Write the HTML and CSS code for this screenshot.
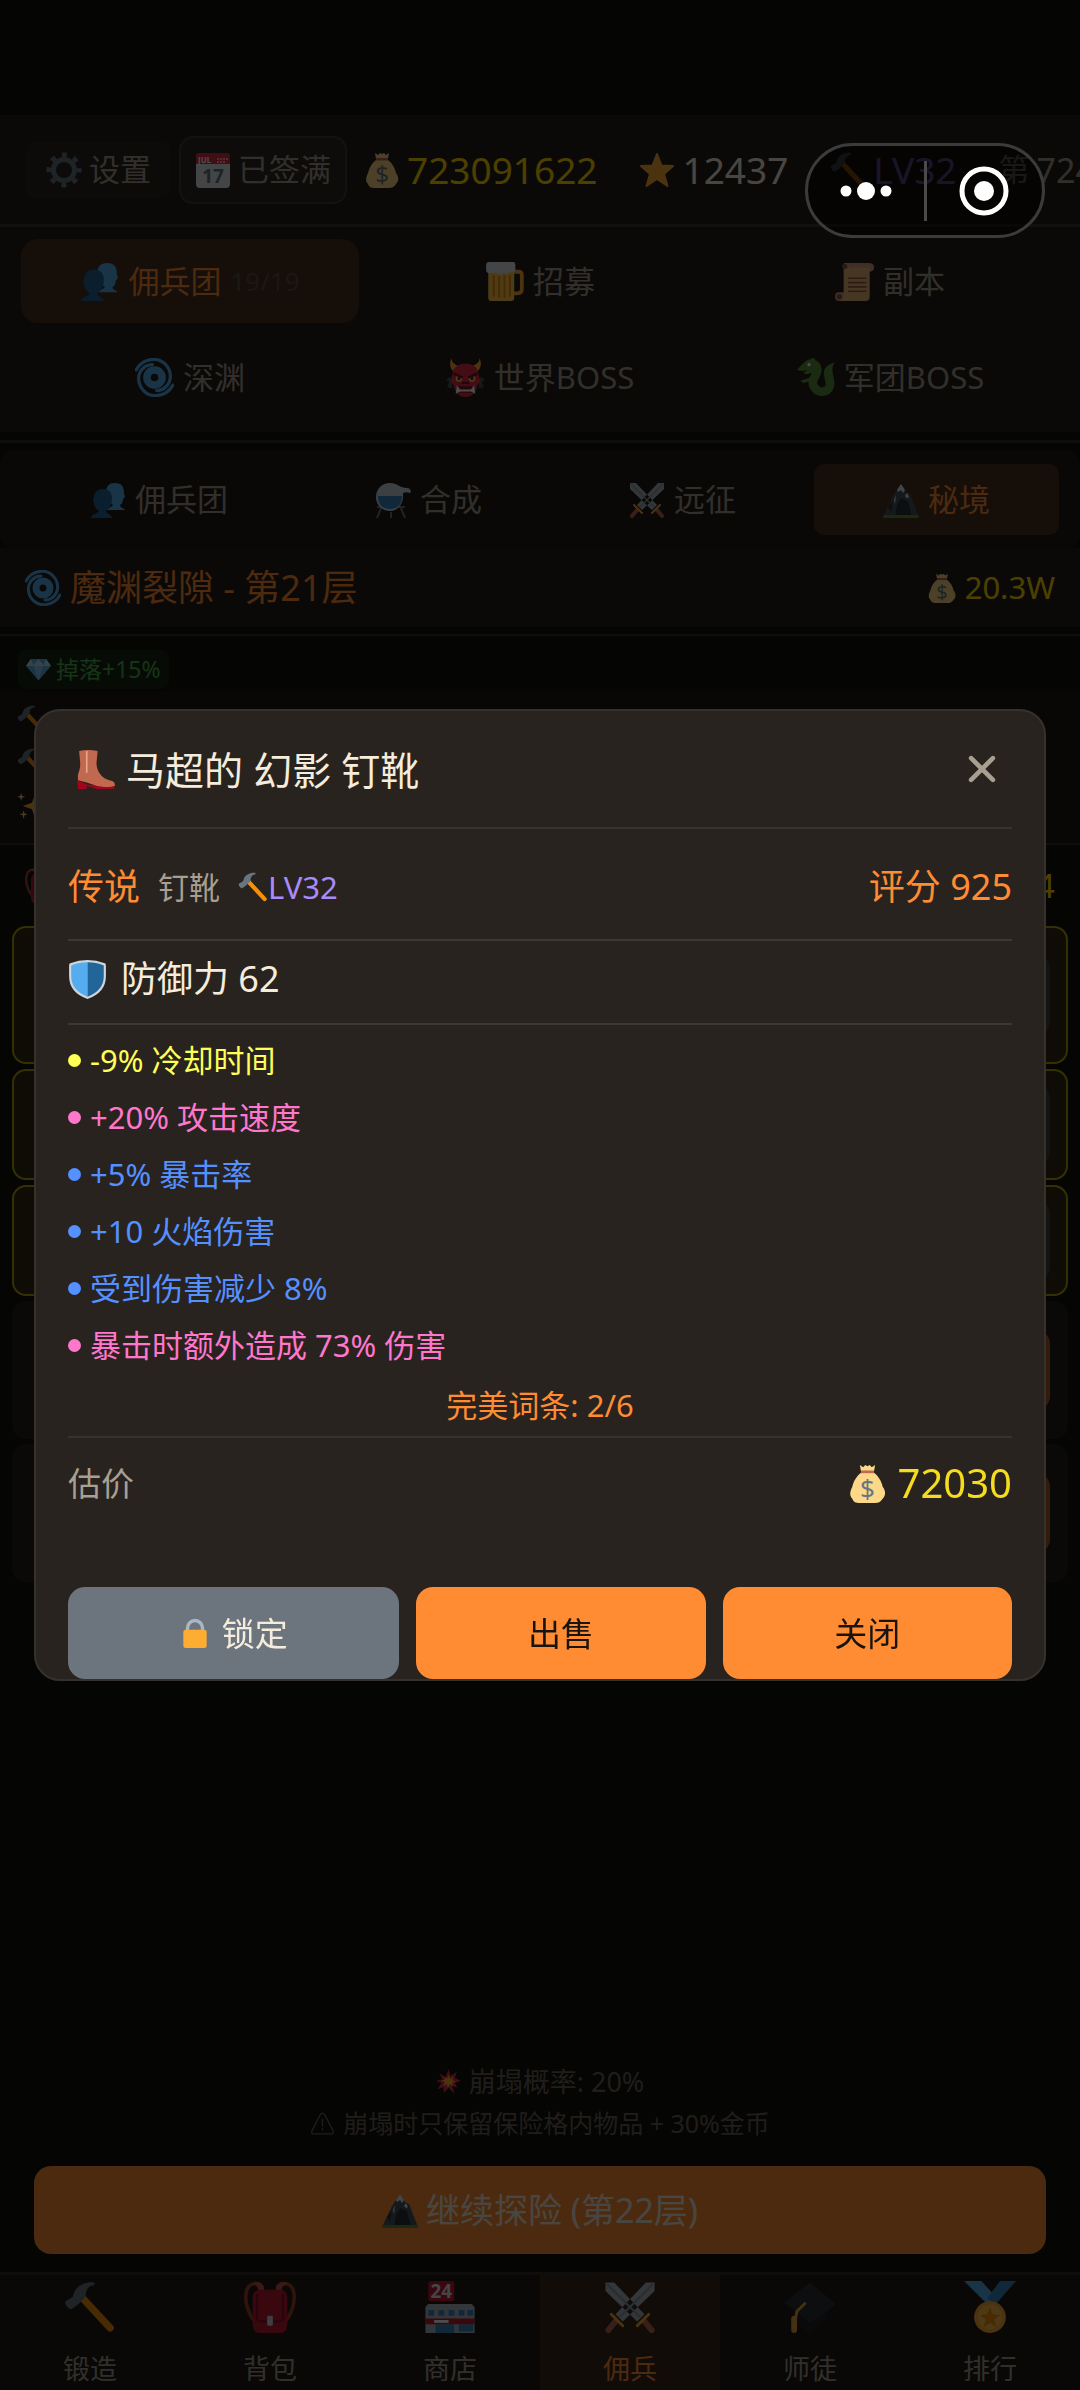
FILE: index.html
```
<!DOCTYPE html>
<html lang="zh-CN">
<head>
    <meta charset="UTF-8">
    <meta name="viewport" content="width=device-width, initial-scale=1.0">
    <title>佣兵团</title>
    <link rel="stylesheet" href="styles.css">
</head>
<body>
    <svg class="sprite" aria-hidden="true">
        <symbol id="gear" viewBox="0 0 36 36">
            <circle cx="18" cy="18" r="15" fill="none" stroke="#66757f" stroke-width="5" stroke-dasharray="5 6.78" stroke-dashoffset="2.5"/>
            <circle cx="18" cy="18" r="10.500" fill="none" stroke="#66757f" stroke-width="5"/>
        </symbol>
        <symbol id="calendar" viewBox="0 0 36 36">
            <path fill="#e1e8ed" d="M1 10h34v22a4 4 0 0 1-4 4H5a4 4 0 0 1-4-4z"/>
            <path fill="#dd2e44" d="M1 12V4a3 3 0 0 1 3-3h28a3 3 0 0 1 3 3v8z"/>
            <path fill="#f4abba" d="M22 6h2v2h-2zm3 0h2v2h-2zm3 0h2v2h-2zm3 0h2v2h-2zm-9 3h2v2h-2zm3 0h2v2h-2zm3 0h2v2h-2z"/>
            <text x="3" y="11" font-size="8" font-weight="700" fill="#fff">JUL</text>
            <text x="18" y="31" font-size="19" font-weight="700" text-anchor="middle" fill="#66757f">17</text>
        </symbol>
        <symbol id="money" viewBox="0 0 36 36">
            <path fill="#fdd888" d="M11 1l3 2 2-2 2 1 2-1 2 2 3-2-1 6H12zM12 8h12c4 3 7 8 8 13 3 4 3 8 0 11-2 3-4 4-7 4H11c-4 0-6-1-7-4-3-3-2-7 0-11 1-5 4-10 8-13z"/>
            <path fill="#bf6952" d="M12 6h12v2.500H12z"/>
            <text x="18" y="31" font-size="24" text-anchor="middle" fill="#67757f">$</text>
        </symbol>
        <symbol id="star" viewBox="0 0 36 36">
            <path fill="#ffac33" stroke="#ffac33" stroke-width="2" stroke-linejoin="round" d="M18 2l4.500 11.500L34 14l-9 8 3.500 12L18 27 7.500 34 11 22l-9-8 11.500-.5z"/>
        </symbol>
        <symbol id="hammer" viewBox="0 0 36 36">
            <path stroke="#f4900c" stroke-width="5" stroke-linecap="round" d="M13 12l19 20.500"/>
            <path fill="#66757f" d="M21 1C15 0 9 3 7 8l-1 3-5 3c-1 2 3 7 5 5l4-3 5-5c0-5 2-8 6-8z"/>
        </symbol>
        <symbol id="people" viewBox="0 0 36 36">
            <path fill="#55acee" d="M17 28c0-2 5-3 6-5-4-3-7-6-7-12 0-7 3-10 9-10 7 0 9 4 9 10l1 4-2 2c0 3-1 5-3 6 0 3 4 3 5 5z"/>
            <path fill="#226699" d="M1 36c0-4 7-4 8-7-3-2-5-4-5-8l-1-4 1-2c0-5 4-8 9-8 6 0 9 4 9 9 0 6-2 10-6 13 0 3 6 3 6 7z"/>
        </symbol>
        <symbol id="beer" viewBox="0 0 36 36">
            <path fill="none" stroke="#ffac33" stroke-width="3.500" d="M26 9h5q3 0 3 3v13q0 4-4 4h-5"/>
            <path fill="#ffcc4d" d="M3 7h24v26q0 3-3 3H6q-3 0-3-3z"/>
            <path stroke="#f4900c" stroke-width="2" d="M8 12v20M13 13v20M18 12v21M23 12v20"/>
            <path fill="#e1e8ed" d="M1 3q0-3 3-3h22q2 0 2 3v5q-2 3-5 1-3 3-6 1-3 3-6 0H5Q1 11 1 7z"/>
        </symbol>
        <symbol id="scroll" viewBox="0 0 36 36">
            <path fill="#d99e82" d="M9 1h22q5 0 5 4t-5 4H11zM4 28q-4 0-4 4t4 4h24v-8z"/>
            <path fill="#e8b877" d="M9 1q4 1 4 4h19v27q0 4-4 4H4q4-1 4-5V6Q6 2 9 1z"/>
            <path stroke="#9b5d40" stroke-width="1.500" d="M12 15h17M12 19h17M12 23h17M12 27h17"/>
            <circle cx="9" cy="4" r="2.500" fill="#8a5a44"/><circle cx="4" cy="32" r="2.500" fill="#8a5a44"/>
        </symbol>
        <symbol id="cyclone" viewBox="0 0 36 36">
            <g fill="none" stroke="#55acee" stroke-linecap="round">
                <circle cx="18" cy="18" r="7" stroke-width="7"/>
                <path stroke-width="3" d="M1 11C7 0 22-2 29 7c5 6 5 15-1 20M35 25C29 36 14 38 7 29 2 23 2 14 8 9"/>
                <path stroke-width="3" d="M28 27q-3 3-8 3M8 9q3-3 8-3"/>
            </g>
        </symbol>
        <symbol id="ogre" viewBox="0 0 36 36">
            <path fill="#4b545d" d="M4 17l-4 3 3 2-2 5 5 1zm28 0l4 3-3 2 2 5-5 1z"/>
            <path fill="#ffac33" d="M5 0c0 5 4 6 8 8l-4 6C3 10 3 5 5 0zm26 0c0 5-4 6-8 8l4 6c6-4 6-9 4-14z"/>
            <path fill="#dd2e44" d="M18 5c8 0 12 5 12 10l2 7-3 3c-1 7-5 11-11 11S8 32 7 25l-3-3 2-7c0-5 4-10 12-10z"/>
            <circle cx="12" cy="19" r="3" fill="#ffcc4d"/><circle cx="24" cy="19" r="3" fill="#ffcc4d"/>
            <circle cx="12" cy="19" r="1.500" fill="#292f33"/><circle cx="24" cy="19" r="1.500" fill="#292f33"/>
            <path fill="#7c1225" d="M7 13l9 4-1 2-8-3zm22 0l-9 4 1 2 8-3zM15 22h6l1 2h-8zM9 26h18l-1 6H10z"/>
            <path fill="#fff" d="M9 33l1-8 3 4h10l3-4 1 8-4-2H13z"/>
        </symbol>
        <symbol id="dragon" viewBox="0 0 36 36">
            <path fill="none" stroke="#5c913b" stroke-width="8" d="M14 6c8 0 6 7 3 12-4 6 1 13 7 13 7 0 9-6 6-13"/>
            <path fill="#5c913b" d="M1 11c5-5 8-10 14-10l5 2-3 10c-4 1-6 3-10 1l3-3-4 1zM27 20c-3-8-1-13 9-16-4 5-2 10-1 16zM4 21l9-3 1 3-7 2zM14 1l2-2 2 3z"/>
            <circle cx="12" cy="6" r="1.500" fill="#fff"/>
        </symbol>
        <symbol id="alembic" viewBox="0 0 36 36">
            <path stroke="#66757f" stroke-width="2" d="M2 25h28M7 24L2 36M25 24l5 12M16 30v6"/>
            <path fill="#ccd6dd" d="M15 1c7 0 10 5 17 5 3 0 5 3 3 5-3-1-5-1-7 0 1 11-5 18-13 18C7 29 1 23 1 15S7 1 15 1z"/>
            <path fill="#3b88c3" d="M3 14h24c0 8-4 13-12 13S3 22 3 14z"/>
        </symbol>
        <symbol id="swords" viewBox="0 0 36 36">
            <path fill="#aab8c2" d="M1 1h6l21 22-5 5L1 7zM35 1h-6L8 23l5 5L35 7z"/>
            <path stroke="#8899a6" stroke-width="1.500" d="M2 2l23 23M34 2L11 25"/>
            <path stroke="#bf6952" stroke-width="4" stroke-linecap="round" d="M8 28l-5 6M28 28l5 6"/>
            <path stroke="#ffac33" stroke-width="2" stroke-linecap="round" d="M5 23l8 8M31 23l-8 8"/>
        </symbol>
        <symbol id="mountain" viewBox="0 0 36 36">
            <path fill="#4b545d" d="M0 35L10 14l8-12 5 8 4 2 9 23z"/>
            <path fill="#292f33" d="M18 16l7 3 4 16H12l2-12zM5 25l5-7-2 12z"/>
            <path fill="#e1e8ed" d="M18 2l4 6-2 3-2-3-3 2-1-2zM22 14l2-3 2 4-2 1zM11 18l2-5-1 9z"/>
            <path fill="#5c913b" d="M1 33h34l1 3H0z"/>
        </symbol>
        <symbol id="gem" viewBox="0 0 36 36">
            <path fill="#5dadec" d="M7 3h22l7 10-18 21L0 13z"/>
            <path fill="#bdddf4" d="M7 3l4 9 7-9 7 9 4-9 7 10-9 0H0z"/>
            <path fill="#8ccaf7" d="M11 13h14l-7 21z"/>
        </symbol>
        <symbol id="sparkles" viewBox="0 0 36 36">
            <path fill="#ffac33" d="M22 3l4 11 10 4-10 4-4 12-4-12-11-4 11-4z"/>
            <path fill="#ffcc80" d="M5 2l1 4 4 1-4 1-1 4-1-4-4-1 4-1zM8 23l1 4 4 1-4 1-1 5-1-5-4-1 4-1z"/>
        </symbol>
        <symbol id="boot" viewBox="0 0 36 36">
            <path fill="#a0041e" d="M0 28l3 1 7 3h6l19 1-1 3H18l-9-3v3H1z"/>
            <path fill="#c1694f" d="M2 1q8-2 17 0l-1 11c0 8 5 14 12 16 4 1 5 2 5 5-5 2-13 1-17 0L9 30l-8-2c-1-7 2-8 2-15z"/>
            <path stroke="#e8a78d" stroke-width="1.500" d="M9 1v20"/>
        </symbol>
        <symbol id="shield" viewBox="0 0 36 36">
            <path fill="#ccd6dd" d="M18 0q8 0 16 3 1 0 1 3v9q0 15-17 21Q1 30 1 15V6q0-3 1-3 8-3 16-3z"/>
            <path fill="#55acee" d="M18 2v32Q3 28 3 15V5q7-3 15-3z"/>
            <path fill="#269" d="M18 2v32q15-6 15-19V5q-7-3-15-3z"/>
        </symbol>
        <symbol id="lock" viewBox="0 0 36 36">
            <path fill="none" stroke="#aab8c2" stroke-width="4" d="M9 18v-6a9 9 0 0 1 18 0v6"/>
            <rect x="4" y="14" width="28" height="22" rx="3" fill="#ffac33"/>
        </symbol>
        <symbol id="boom" viewBox="0 0 36 36">
            <path fill="#dd2e44" d="M18 0l3 10 9-6-3 9 9 4-9 3 4 7-8-3 4 12-9-9-7 8v-9l-9 3 6-9-8-3 9-2-4-9 9 6z"/>
            <path fill="#ffac33" d="M18 9l2 5 5-3-2 5 5 2-5 2 2 5-5-3-3 5-1-5-6 2 3-5-5-2 5-2-1-4 4 3z"/>
        </symbol>
        <symbol id="warn" viewBox="0 0 36 36">
            <path fill="none" stroke="currentColor" stroke-width="2" stroke-linejoin="round" d="M18 3q2 0 3 2l12 23q2 5-3 5H6q-5 0-3-5L15 5q1-2 3-2z"/>
            <path stroke="currentColor" stroke-width="2" d="M18 11v11M18 25v3"/>
        </symbol>
        <symbol id="backpack" viewBox="0 0 36 36">
            <path fill="none" stroke="#a0412d" stroke-width="2.500" d="M13 5C11 0 4 1 2 6c-2 7 0 16 7 24M23 5c2-5 9-4 11 1 2 7 0 16-7 24"/>
            <path fill="#c1564f" d="M14 6c0-5-5-6-9-4 4 0 5 3 5 5zM22 6c0-5 5-6 9-4-4 0-5 3-5 5z"/>
            <path fill="#be1931" d="M10 6h16q4 1 4 6v17q0 7-5 7H11q-5 0-5-7V12q0-5 4-6z"/>
            <path fill="none" stroke="#8b0f24" stroke-width="1.500" d="M9 9v17q0 2 3 2h12q3 0 3-2V9"/>
            <rect x="16" y="24" width="4" height="7" rx="1" fill="#ccd6dd"/>
        </symbol>
        <symbol id="store" viewBox="0 0 36 36">
            <rect x="3" y="0" width="18" height="14" rx="2" fill="#be1931"/>
            <text x="12" y="12" font-size="13" font-weight="700" text-anchor="middle" fill="#e1e8ed">24</text>
            <path fill="#aab8c2" d="M1 18l2-2h30l2 2v18H1z"/>
            <path fill="#3b88c3" d="M3 20h4v4H3zm7 0h4v4h-4zm7 0h4v4h-4zm7 0h4v4h-4zm6 0h4v4h-4zM8 30h13v6H8zm16 0h10v5H24z"/>
            <path fill="#be1931" d="M1 26h34v4H1z"/>
            <path fill="#fff" d="M7 27h10v2H7z"/>
        </symbol>
        <symbol id="cap" viewBox="0 0 36 36">
            <path fill="#292f33" d="M0 15L18 1l18 15-7 6v5l-11 9-11-8v-8z"/>
            <path fill="#1c2226" d="M7 20l11 9 11-7v5l-11 9-11-8z"/>
            <path fill="none" stroke="#e8a53c" stroke-width="2" d="M15 15l-6 6-1 5"/>
            <path stroke="#e8a53c" stroke-width="4" stroke-linecap="round" d="M7 26v8"/>
        </symbol>
        <symbol id="medal" viewBox="0 0 36 36">
            <path fill="#55acee" d="M0 0h12l11 12-7 4z"/>
            <path fill="#3b88c3" d="M36 0H25l-9 12 6 4z"/>
            <circle cx="18" cy="25" r="11" fill="#ffac33"/>
            <circle cx="18" cy="25" r="8.500" fill="#ffbf4d"/>
            <path fill="#f4900c" d="M18 18l2 5 5 .5-4 3 1.500 5.500-4.500-3-4.500 3 1.500-5.500-4-3 5-.5z"/>
        </symbol>
        <symbol id="close" viewBox="0 0 36 36">
            <path stroke="currentColor" stroke-width="6" stroke-linecap="round" d="M4 4l28 28M32 4L4 32"/>
        </symbol>
    </svg>

    <div class="app">
        <header class="topbar">
            <button type="button" class="settings"><svg class="icon"><use href="#gear"/></svg>设置</button>
            <button type="button" class="sign"><svg class="icon"><use href="#calendar"/></svg>已签满</button>
            <div class="stats">
                <span class="stat gold"><svg class="icon"><use href="#money"/></svg>723091622</span>
                <span class="stat"><svg class="icon"><use href="#star"/></svg>12437</span>
                <span class="stat purple"><svg class="icon"><use href="#hammer"/></svg>LV32</span>
                <span class="stat days"><small>第</small>724</span>
            </div>
        </header>

        <div class="tabs">
            <button type="button" class="active"><svg class="icon"><use href="#people"/></svg>佣兵团<small>19/19</small></button>
            <button type="button"><svg class="icon"><use href="#beer"/></svg>招募</button>
            <button type="button"><svg class="icon"><use href="#scroll"/></svg>副本</button>
            <button type="button"><svg class="icon"><use href="#cyclone"/></svg>深渊</button>
            <button type="button"><svg class="icon"><use href="#ogre"/></svg>世界BOSS</button>
            <button type="button"><svg class="icon"><use href="#dragon"/></svg>军团BOSS</button>
        </div>

        <div class="subtabs">
            <button type="button"><svg class="icon"><use href="#people"/></svg>佣兵团</button>
            <button type="button"><svg class="icon"><use href="#alembic"/></svg>合成</button>
            <button type="button"><svg class="icon"><use href="#swords"/></svg>远征</button>
            <button type="button" class="active"><svg class="icon"><use href="#mountain"/></svg>秘境</button>
        </div>

        <div class="floor">
            <h1><svg class="icon"><use href="#cyclone"/></svg>魔渊裂隙 - 第21层</h1>
            <span class="floor-gold"><svg class="icon small"><use href="#money"/></svg>20.3W</span>
        </div>

        <div class="buffs">
            <span class="buff"><svg class="icon tiny"><use href="#gem"/></svg>掉落+15%</span>
        </div>

        <div class="log">
            <div><svg class="icon small"><use href="#hammer"/></svg></div>
            <div><svg class="icon small"><use href="#hammer"/></svg></div>
            <div><svg class="icon small"><use href="#sparkles"/></svg></div>
        </div>

        <div class="loot-head">
            <svg class="icon"><use href="#backpack"/></svg>
            <span>4</span>
        </div>
        <div class="loot">
            <div class="item safe tall"><span class="item-side"></span></div>
            <div class="item safe"><span class="item-side"></span></div>
            <div class="item safe"><span class="item-side"></span></div>
            <div class="item tall"><span class="item-side"></span></div>
            <div class="item tall"><span class="item-side"></span></div>
        </div>

        <div class="explore">
            <p class="risk"><svg class="icon tiny"><use href="#boom"/></svg>崩塌概率: 20%</p>
            <p class="risk-note"><svg class="icon tiny"><use href="#warn"/></svg>崩塌时只保留保险格内物品 + 30%金币</p>
            <button type="button" class="go"><svg class="icon"><use href="#mountain"/></svg>继续探险 (第22层)</button>
        </div>

        <nav class="nav">
            <a href="#"><svg class="icon big"><use href="#hammer"/></svg>锻造</a>
            <a href="#"><svg class="icon big"><use href="#backpack"/></svg>背包</a>
            <a href="#"><svg class="icon big"><use href="#store"/></svg>商店</a>
            <a href="#" class="active"><svg class="icon big"><use href="#swords"/></svg>佣兵</a>
            <a href="#"><svg class="icon big"><use href="#cap"/></svg>师徒</a>
            <a href="#"><svg class="icon big"><use href="#medal"/></svg>排行</a>
        </nav>
    </div>

    <div class="mask">
        <div class="modal" role="dialog" aria-labelledby="modal_title">
            <div class="modal-head">
                <h2 id="modal_title"><svg class="icon boot"><use href="#boot"/></svg>马超的 幻影 钉靴</h2>
                <button type="button" class="close" aria-label="关闭"><svg><use href="#close"/></svg></button>
            </div>
            <div class="meta">
                <span class="quality">传说</span>
                <span class="kind">钉靴</span>
                <span class="level"><svg class="icon small"><use href="#hammer"/></svg>LV32</span>
                <span class="score">评分 925</span>
            </div>
            <div class="base"><svg class="icon boot"><use href="#shield"/></svg>防御力 62</div>
            <ul class="affixes">
                <li class="yellow">-9% 冷却时间</li>
                <li class="pink">+20% 攻击速度</li>
                <li class="blue">+5% 暴击率</li>
                <li class="blue">+10 火焰伤害</li>
                <li class="blue">受到伤害减少 8%</li>
                <li class="pink">暴击时额外造成 73% 伤害</li>
            </ul>
            <p class="perfect">完美词条: 2/6</p>
            <div class="price">
                <span>估价</span>
                <span class="price-num"><svg class="icon boot"><use href="#money"/></svg>72030</span>
            </div>
            <div class="actions">
                <button type="button" class="lock"><svg class="icon small"><use href="#lock"/></svg>锁定</button>
                <button type="button">出售</button>
                <button type="button">关闭</button>
            </div>
        </div>
    </div>

    <div class="capsule">
        <button type="button" aria-label="更多">
            <svg viewBox="0 0 52 20" width="52" height="20" fill="#fff"><circle cx="6" cy="10" r="5.500"/><circle cx="26" cy="10" r="9"/><circle cx="46" cy="10" r="5.500"/></svg>
        </button>
        <button type="button" aria-label="退出">
            <svg viewBox="0 0 50 50" width="50" height="50"><circle cx="25" cy="25" r="22" fill="none" stroke="#fff" stroke-width="5"/><circle cx="25" cy="25" r="10" fill="#fff"/></svg>
        </button>
    </div>
</body>
</html>
```

FILE: styles.css
```
* {
    box-sizing: border-box;
}
body {
    margin: 0;
    background-color: #121110;
    color: #f5ecdc;
    font-family: "Noto Sans", "Noto Sans CJK SC", sans-serif;
    font-size: 31px;
    line-height: 1;
}
h1, h2, p, ul {
    margin: 0;
    padding: 0;
    font-weight: normal;
}
button {
    font: inherit;
    color: inherit;
    background: none;
    border: none;
    padding: 0;
    cursor: pointer;
}
.sprite {
    display: none;
}
.icon {
    width: 36px;
    height: 36px;
    flex: none;
}
.icon.tiny {
    width: 25px;
    height: 25px;
}
.icon.small {
    width: 30px;
    height: 30px;
}
.icon.boot {
    width: 39px;
    height: 39px;
}
.icon.big {
    width: 52px;
    height: 52px;
}

.app {
    display: flex;
    flex-direction: column;
    min-height: 100vh;
    padding-top: 115px;
    overflow: hidden;
}

/* top bar */
.topbar {
    display: flex;
    align-items: center;
    gap: 8px;
    height: 112px;
    padding: 0 26px;
    background-color: #221e1a;
    border-bottom: 3px solid #3d3833;
    white-space: nowrap;
}
.settings, .sign {
    display: flex;
    align-items: center;
    flex: none;
    gap: 7px;
    color: #a89f91;
}
.settings {
    height: 56px;
    padding: 0 20px;
    background-color: #2b2723;
    border-radius: 10px;
}
.sign {
    height: 68px;
    padding: 0 14px;
    background-color: #2d2a26;
    border: 2px solid #413d39;
    border-radius: 14px;
}
.stats {
    display: flex;
    align-items: center;
    gap: 42px;
    padding-left: 9px;
}
.stat {
    display: flex;
    align-items: center;
    flex: none;
    gap: 7px;
    font-size: 37px;
}
.gold {
    color: #ffd700;
}
.purple {
    color: #a78bfa;
}
.days {
    color: #a89f91;
    font-size: 34px;
}
.days small {
    font-size: 31px;
}

/* tabs */
.tabs {
    display: grid;
    grid-template-columns: repeat(3, 1fr);
    gap: 12px;
    padding: 12px 21px 13px;
    background-color: #221e1a;
}
.tabs button, .subtabs button {
    display: flex;
    align-items: center;
    justify-content: center;
    gap: 9px;
    color: #a89f91;
}
.tabs button {
    height: 84px;
    border-radius: 17px;
}
.tabs .icon {
    width: 39px;
    height: 39px;
}
.tabs small {
    font-size: 26px;
    color: #585048;
}
.tabs .active, .subtabs .active {
    background-color: #482f1e;
    color: #ff8c32;
}
.subtabs {
    display: flex;
    gap: 9px;
    padding: 14px 21px 13px;
    background-color: #1e1b18;
    border-radius: 14px;
    margin-top: 18px;
    position: relative;
}
.subtabs::before {
    content: "";
    position: absolute;
    left: 0;
    right: 0;
    top: -10px;
    height: 3px;
    background-color: #35312d;
}
.subtabs button {
    flex: 1 1 auto;
    height: 71px;
    border-radius: 10px;
}

/* floor */
.floor {
    display: flex;
    align-items: center;
    justify-content: space-between;
    height: 79px;
    padding: 0 25px;
    background-color: #221e1a;
}
.floor h1 {
    display: flex;
    align-items: center;
    gap: 9px;
    font-size: 36px;
    color: #ff8c32;
}
.floor-gold {
    display: flex;
    align-items: center;
    gap: 8px;
    color: #ffd700;
}
.buffs {
    margin-top: 7px;
    padding: 14px 18px 3px;
    border-top: 2px solid #35312d;
}
.buff {
    display: inline-flex;
    align-items: center;
    gap: 5px;
    height: 39px;
    padding: 0 8px;
    font-size: 23px;
    color: #4caf50;
    background-color: #1a2614;
    border-radius: 8px;
}
.log {
    padding: 6px 17px 16px;
    background-color: #1c1916;
    border-bottom: 2px solid #35312d;
}
.log div {
    display: flex;
    align-items: center;
    height: 43px;
}

/* loot */
.loot-head {
    display: flex;
    align-items: center;
    justify-content: space-between;
    height: 81px;
    padding: 0 25px;
    font-size: 33px;
    color: #ffd700;
}
.loot {
    display: flex;
    flex-direction: column;
    gap: 5px;
    padding: 0 12px;
}
.item {
    display: flex;
    align-items: center;
    justify-content: flex-end;
    height: 111px;
    padding: 0 16px;
    background-color: #221e1a;
    border: 2px solid #25211d;
    border-radius: 14px;
}
.item.tall {
    height: 138px;
}
.item.safe {
    background-color: #302b10;
    border-color: #b0a010;
}
.item-side {
    width: 120px;
    height: 80px;
    border-radius: 14px;
    background-color: #b0602a;
}
.safe .item-side {
    background-color: #454547;
}

/* explore */
.explore {
    display: flex;
    flex-direction: column;
    align-items: center;
    margin-top: auto;
    padding: 18px 34px;
}
.risk, .risk-note {
    display: flex;
    align-items: center;
    gap: 8px;
    height: 42px;
    color: #6b6359;
}
.risk {
    font-size: 27px;
}
.risk-note {
    font-size: 25px;
}
.go {
    display: flex;
    align-items: center;
    justify-content: center;
    gap: 8px;
    width: 100%;
    height: 88px;
    margin-top: 22px;
    font-size: 34px;
    background-color: #ff8c32;
    border-radius: 17px;
}

/* bottom nav */
.nav {
    display: flex;
    border-top: 3px solid #35312d;
    background-color: #201d19;
}
.nav a {
    display: flex;
    flex-direction: column;
    align-items: center;
    flex: 1;
    gap: 22px;
    height: 115px;
    padding-top: 6px;
    font-size: 27px;
    color: #a89f91;
    text-decoration: none;
}
.nav .active {
    background-color: #3a281c;
    color: #ff8c32;
}

/* modal */
.mask {
    position: fixed;
    inset: 0;
    display: flex;
    align-items: center;
    justify-content: center;
    padding: 0 34px;
    background-color: rgba(0, 0, 0, 0.7);
}
.modal {
    width: 100%;
    padding: 0 32px;
    background-color: #28231f;
    border: 2px solid #36312d;
    border-radius: 26px;
    overflow: hidden;
}
.modal-head {
    display: flex;
    align-items: center;
    justify-content: space-between;
    height: 118px;
    padding: 0 16px 0 9px;
    border-bottom: 2px solid #38322e;
}
.modal-head h2 {
    display: flex;
    align-items: center;
    gap: 10px;
    font-size: 39px;
}
.close {
    color: #a89f91;
}
.close svg {
    display: block;
    width: 28px;
    height: 28px;
}
.meta {
    display: flex;
    align-items: center;
    gap: 18px;
    height: 112px;
    padding-top: 6px;
    border-bottom: 2px solid #3d3732;
}
.quality, .score {
    font-size: 36px;
    color: #ff8c32;
}
.kind {
    color: #a89f91;
}
.level {
    display: flex;
    align-items: center;
    color: #a78bfa;
}
.score {
    margin-left: auto;
}
.base {
    display: flex;
    align-items: center;
    gap: 14px;
    height: 84px;
    padding-bottom: 6px;
    font-size: 36px;
    border-bottom: 2px solid #3d3732;
}
.affixes {
    padding-top: 7px;
    list-style: none;
}
.affixes li {
    display: flex;
    align-items: center;
    gap: 9px;
    height: 57px;
}
.affixes li::before {
    content: "";
    width: 13px;
    height: 13px;
    border-radius: 50%;
    background-color: currentColor;
}
.yellow {
    color: #ffff55;
}
.pink {
    color: #ff77cc;
}
.blue {
    color: #5590ff;
}
.perfect {
    height: 64px;
    line-height: 62px;
    text-align: center;
    color: #ff8c32;
    border-bottom: 2px solid #38322e;
}
.price {
    display: flex;
    align-items: center;
    justify-content: space-between;
    height: 90px;
    font-size: 33px;
    color: #a89f91;
}
.price-num {
    display: flex;
    align-items: center;
    gap: 11px;
    font-size: 40px;
    color: #f5dc1e;
}
.actions {
    display: flex;
    gap: 17px;
    margin-top: 59px;
}
.actions button {
    display: flex;
    align-items: center;
    justify-content: center;
    flex: 1 1 auto;
    gap: 12px;
    height: 92px;
    font-size: 33px;
    color: #1a1410;
    background-color: #ff8c32;
    border-radius: 17px;
}
.actions .lock {
    color: #f5ecdc;
    background-color: #6c757d;
}

/* mini program capsule */
.capsule {
    position: fixed;
    top: 143px;
    right: 35px;
    display: flex;
    align-items: center;
    width: 240px;
    height: 95px;
    border: 3px solid #3b3b3b;
    border-radius: 48px;
    background-color: rgba(0, 0, 0, 0.5);
}
.capsule button {
    display: flex;
    align-items: center;
    justify-content: center;
    flex: 1;
    height: 60px;
}
.capsule button + button {
    border-left: 3px solid #4a4a4a;
}
```
